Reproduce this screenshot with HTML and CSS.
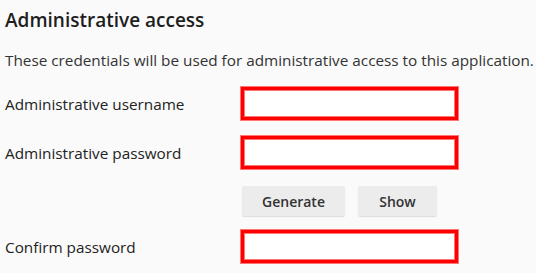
FILE: index.html
```html
<!DOCTYPE html>
<html lang="en">
<head>
  <meta charset="UTF-8">
  <meta name="viewport" content="width=device-width, initial-scale=1.0">
  <title>Administrative access</title>
  <link rel="stylesheet" href="styles.css">
</head>
<body>
  <main class="admin">
    <h1 class="admin__title">Administrative access</h1>
    <p class="admin__intro">These credentials will be used for administrative access to this application.</p>
    <form class="admin__form">
      <div class="form__row">
        <label for="adminUser">Administrative username</label>
        <input type="text" id="adminUser" class="field field--error">
      </div>
      <div class="form__row">
        <label for="adminPass">Administrative password</label>
        <input type="password" id="adminPass" class="field field--error">
      </div>
      <div class="form__row form__row--buttons">
        <span class="spacer"></span>
        <button type="button" class="btn btn--generate">Generate</button>
        <button type="button" class="btn btn--show">Show</button>
      </div>
      <div class="form__row">
        <label for="adminConfirm">Confirm password</label>
        <input type="password" id="adminConfirm" class="field field--error">
      </div>
    </form>
  </main>
</body>
</html>
```

FILE: styles.css
```css
:root {
  --bg: #fafafa;
  --text: #222;
  --muted: #333;
  --error: #ff0000;
  --error-soft: #ff7575;
  --btn-bg: #ececec;
}
html {
  font-family: 'Open Sans', 'Noto Sans', sans-serif;
  font-size: 15.3px;
}
body {
  margin: 0;
  padding: 0 5px;
  background-color: var(--bg);
  color: var(--text);
}
.admin__title {
  font-size: 19px;
  font-weight: 600;
  margin: 7px 0 0;
  color: #1e1e1e;
}
.admin__intro {
  margin: 17px 0 0;
  color: var(--muted);
  white-space: nowrap;
}
.admin__form {
  margin-top: 16px;
  display: flex;
  flex-direction: column;
  gap: 14px;
}
.form__row {
  display: flex;
  align-items: center;
}
.form__row label,
.form__row .spacer {
  width: 235px;
  flex-shrink: 0;
}
.form__row--buttons {
  margin: 2px 0 -1px;
  gap: 13px;
}
.form__row--buttons .spacer {
  width: 224px;
}
.field {
  box-sizing: border-box;
  width: 219px;
  height: 35px;
  margin: 0;
  background: #fff;
  border: 1px solid #ccc;
  font: inherit;
}
.field--error {
  border-color: var(--error-soft);
  box-shadow: inset 0 0 0 3px var(--error), inset 0 0 0 4px var(--error-soft);
}
.btn {
  height: 30px;
  border: none;
  border-radius: 2px;
  background: var(--btn-bg);
  box-shadow: 0 1px 1px rgba(0, 0, 0, 0.12);
  font-family: inherit;
  font-size: 14px;
  font-weight: 600;
  color: var(--muted);
  padding: 0;
}
.btn--generate {
  width: 103px;
}
.btn--show {
  width: 79px;
}
```
